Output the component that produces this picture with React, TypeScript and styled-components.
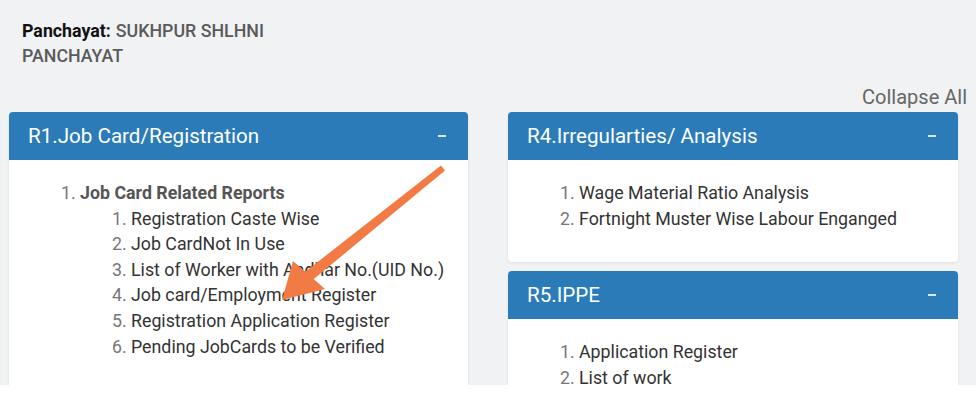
import React from 'react';
import styled, { createGlobalStyle } from 'styled-components';

const GlobalStyle = createGlobalStyle`
    html, body {
        margin: 0;
        padding: 0;
        background: #ffffff;
        font-family: Roboto, "Liberation Sans", Arial, sans-serif;
    }
`;

interface IReport {
    title: string,
    items: string[],
}

interface IGroup {
    title: string,
    children: string[],
}

const Page = styled.div`
    position: relative;
    height: 385px;
    overflow: hidden;
    box-sizing: border-box;
    padding: 18px 9px 0 9px;
    background: #f1f2f4;
`;

const Info = styled.div`
    width: 260px;
    padding-left: 13px;
    font-size: 17.8px;
    line-height: 25px;
    color: #111;
`;

const Label = styled.span`
    font-weight: 700;
    margin-right: 5px;
`;

const Value = styled.span`
    font-weight: 500;
    color: #5a5a5a;
`;

const CollapseRow = styled.div`
    display: flex;
    justify-content: flex-end;
    margin-top: 16px;
    height: 26px;
    line-height: 26px;
    margin-bottom: 2px;
`;

const CollapseLink = styled.a`
    font-size: 20px;
    color: #666;
    cursor: pointer;
`;

const Columns = styled.div`
    display: grid;
    grid-template-columns: 459px 450px;
    column-gap: 40px;
    align-items: start;
`;

const Stack = styled.div`
    display: flex;
    flex-direction: column;
    gap: 9px;
`;

const Panel = styled.div`
    background: #fff;
    border-radius: 4px;
    box-shadow: 0 1px 3px rgba(0, 0, 0, 0.08);
    overflow: hidden;
`;

const PanelHead = styled.div`
    height: 48px;
    display: flex;
    align-items: center;
    justify-content: space-between;
    padding: 0 20px 0 19px;
    background: #2b7bb9;
    color: #fff;
    font-size: 20.6px;
`;

const Toggle = styled.span`
    display: inline-block;
    width: 8px;
    height: 2px;
    background: #d6e8f5;
    margin-right: 2px;
`;

const PanelBody = styled.div<{ $bottom: number }>`
    padding: 20px 0 ${p => p.$bottom}px 0;
`;

const List = styled.ol<{ $indent: number }>`
    margin: 0;
    padding-left: ${p => p.$indent}px;
    font-size: 17.8px;
    line-height: 25.6px;
    color: #333;

    li::marker {
        color: #777;
    }
`;

const GroupItem = styled.li`
    font-weight: 700;
    color: #555;

    &::marker {
        font-weight: 400;
    }
`;

const SubList = styled.ol`
    margin: 0;
    padding-left: 51px;
    font-weight: 400;
    color: #333;
`;

const Arrow = styled.svg`
    position: absolute;
    left: 0;
    top: 0;
    pointer-events: none;
`;

const group: IGroup = {
    title: 'Job Card Related Reports',
    children: [
        'Registration Caste Wise',
        'Job CardNot In Use',
        'List of Worker with Aadhar No.(UID No.)',
        'Job card/Employment Register',
        'Registration Application Register',
        'Pending JobCards to be Verified',
    ],
};

const rightReports: IReport[] = [
    {
        title: 'R4.Irregularties/ Analysis',
        items: ['Wage Material Ratio Analysis', 'Fortnight Muster Wise Labour Enganged'],
    },
    {
        title: 'R5.IPPE',
        items: ['Application Register', 'List of work'],
    },
];

const App = () => {
    return (
        <>
            <GlobalStyle />
            <Page>
                <Info>
                    <Label>Panchayat:</Label>
                    <Value>SUKHPUR SHLHNI PANCHAYAT</Value>
                </Info>
                <CollapseRow>
                    <CollapseLink>Collapse All</CollapseLink>
                </CollapseRow>
                <Columns>
                    <Panel>
                        <PanelHead>
                            R1.Job Card/Registration
                            <Toggle />
                        </PanelHead>
                        <PanelBody $bottom={40}>
                            <List $indent={71}>
                                <GroupItem>
                                    {group.title}
                                    <SubList>
                                        {group.children.map(c => <li key={c}>{c}</li>)}
                                    </SubList>
                                </GroupItem>
                            </List>
                        </PanelBody>
                    </Panel>
                    <Stack>
                        {rightReports.map((r, i) => (
                            <Panel key={r.title}>
                                <PanelHead>
                                    {r.title}
                                    <Toggle />
                                </PanelHead>
                                <PanelBody $bottom={i === 0 ? 31 : 20}>
                                    <List $indent={71}>
                                        {r.items.map(it => <li key={it}>{it}</li>)}
                                    </List>
                                </PanelBody>
                            </Panel>
                        ))}
                    </Stack>
                </Columns>
                <Arrow width="976" height="385" viewBox="0 0 976 385">
                    <polygon
                        points="445,170.5 441,165.5 301,275 309,283"
                        fill="#f27a44"
                    />
                    <polygon points="282,300 293,261 325,289" fill="#f27a44" />
                </Arrow>
            </Page>
        </>
    );
};

export default App;
